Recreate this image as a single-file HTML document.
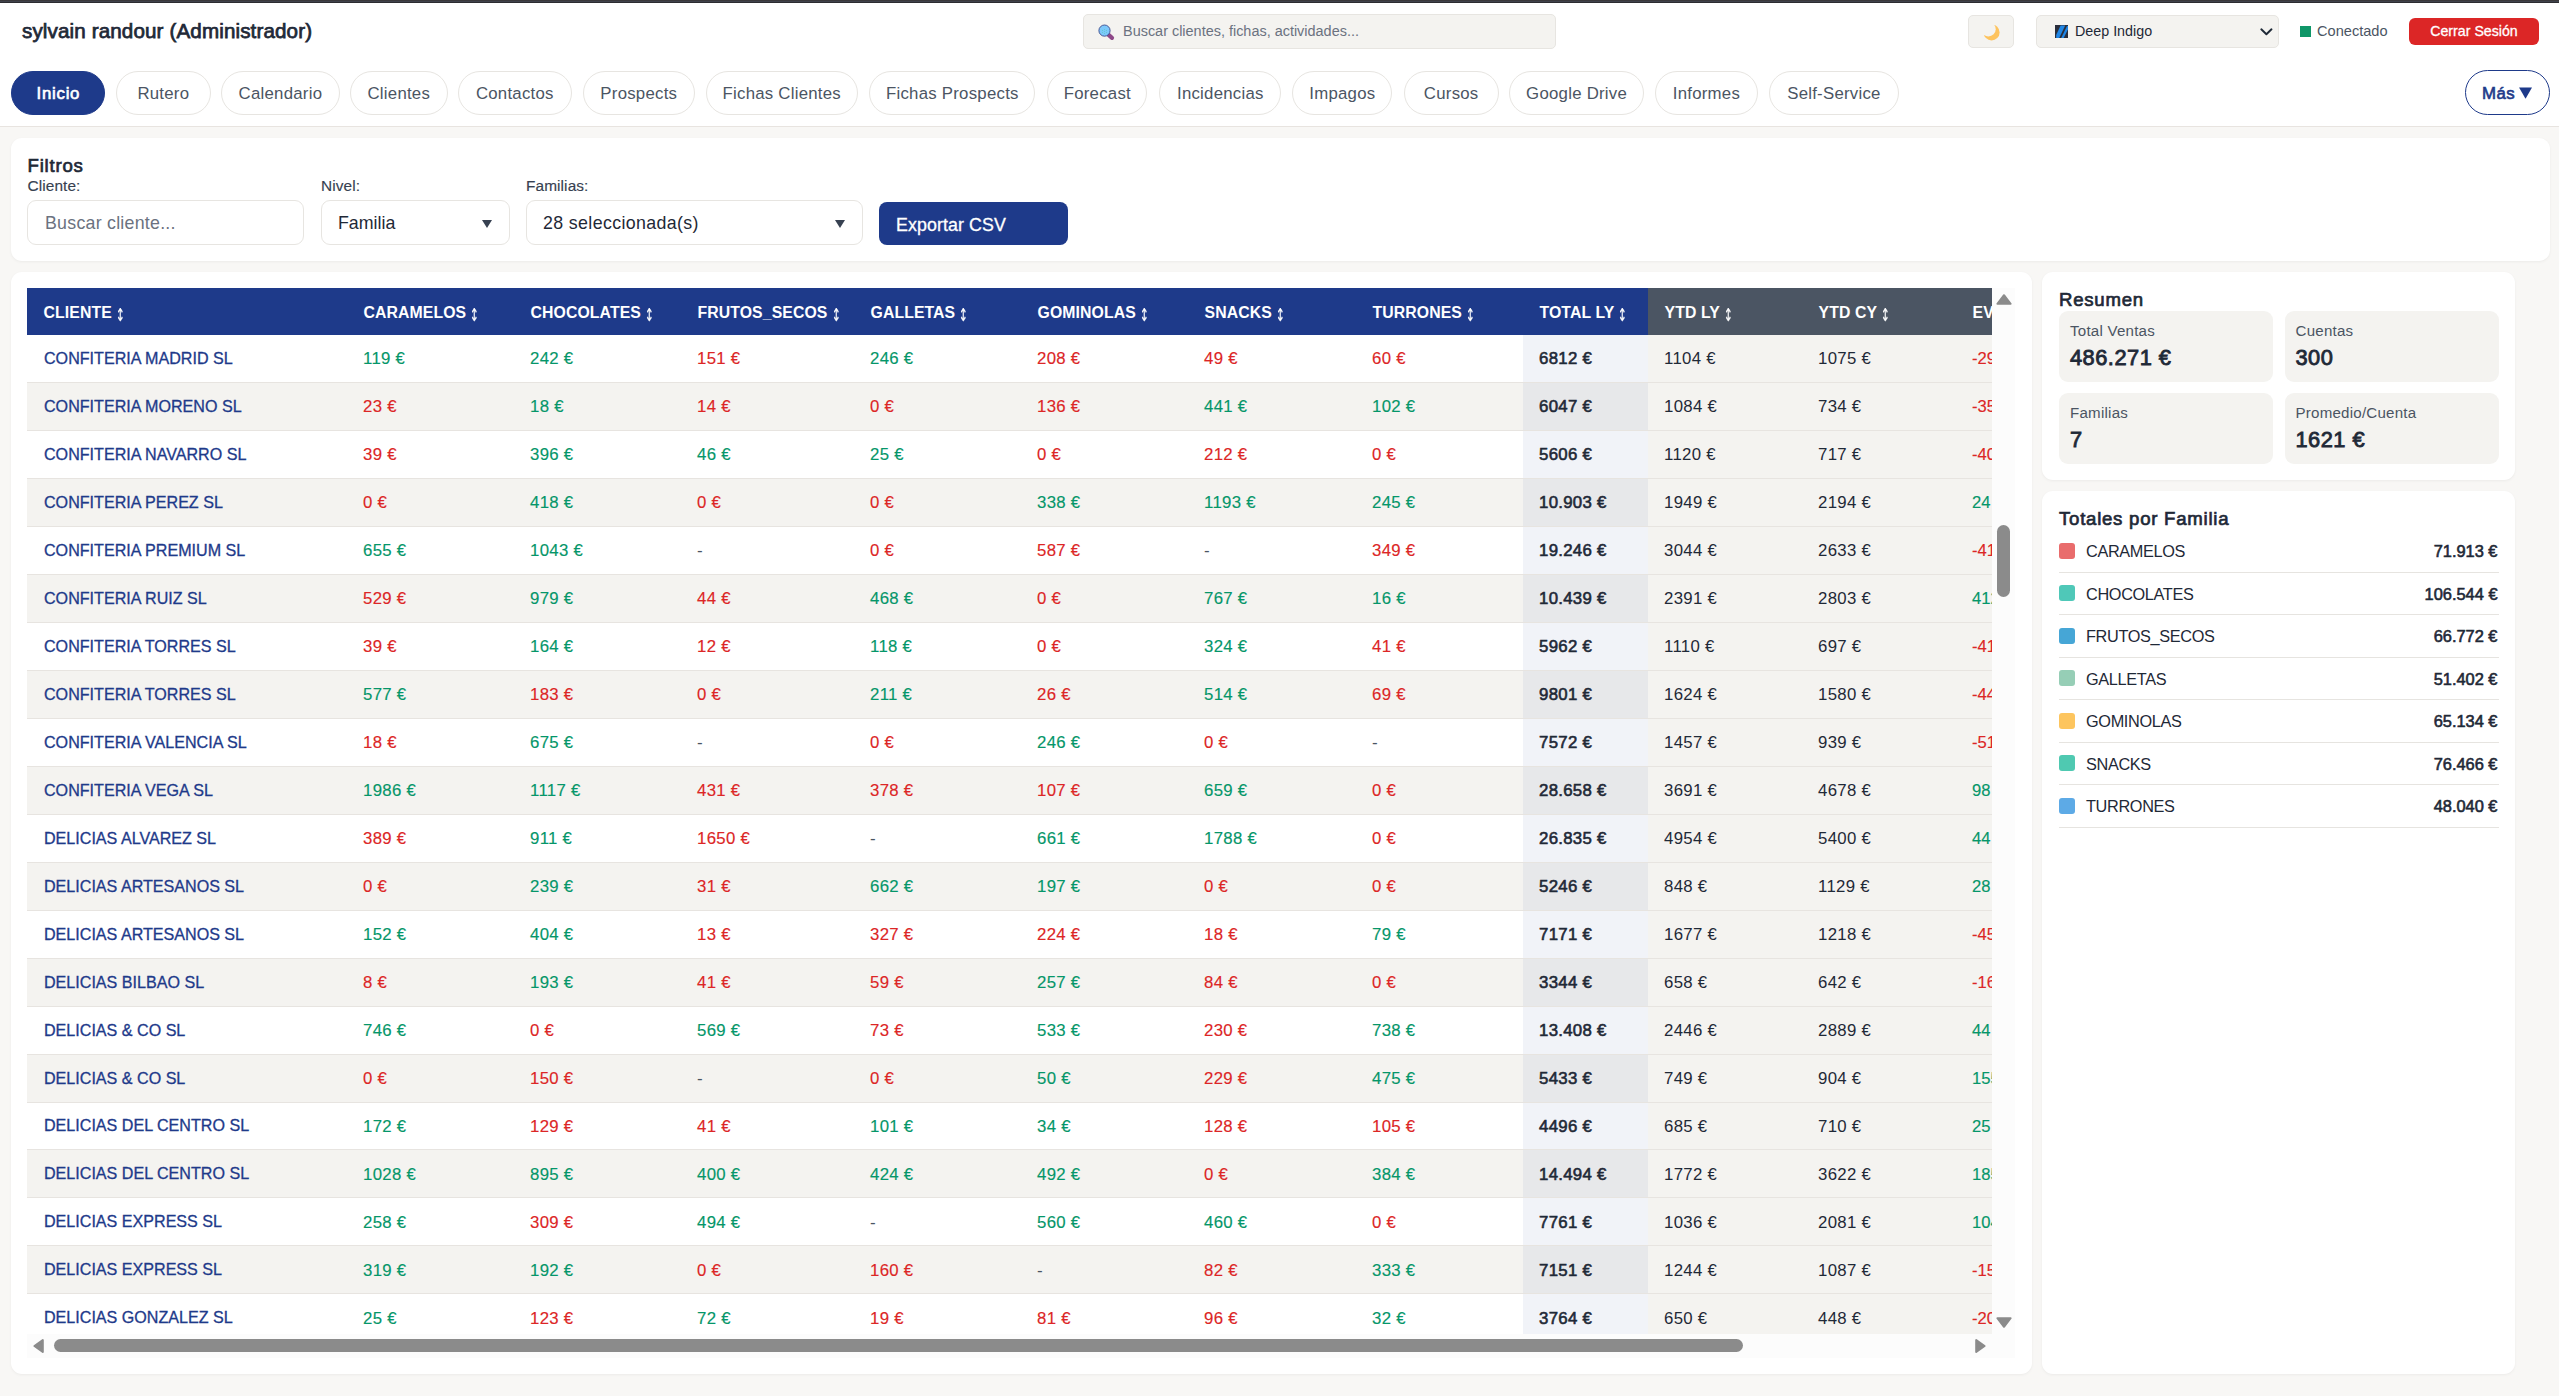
<!DOCTYPE html>
<html lang="es">
<head>
<meta charset="utf-8">
<title>CRM - Ventas por Familia</title>
<style>
*{box-sizing:border-box;margin:0;padding:0}
html,body{width:2559px;height:1396px;overflow:hidden}
body{background:#f8f7f5;font-family:"Liberation Sans",sans-serif;color:#1f2937;position:relative}
.topbar{position:absolute;left:0;top:0;width:2559px;height:3px;background:linear-gradient(#3a383a 0,#3a383a 1px,#40434c 1px,#40434c 2px,#2d2d31 2px,#2d2d31 3px)}
.hdr{position:absolute;left:0;top:3px;width:2559px;height:57px;background:#fff;box-shadow:0 1px 4px rgba(0,0,0,.04)}
.title{position:absolute;left:22px;top:15px;font-size:20.6px;letter-spacing:.13px;-webkit-text-stroke:.75px #1f2937;color:#1f2937;line-height:26px;white-space:nowrap}
.search{position:absolute;left:1083px;top:11px;width:473px;height:34.5px;background:#f4f3f0;border:1px solid #e7e5e1;border-radius:5px}
.mag{position:absolute;left:14px;top:9px}
.ph{position:absolute;left:39px;top:0;line-height:32.5px;font-size:14.45px;color:#6b7280;white-space:nowrap}
.moonbtn{position:absolute;left:1968px;top:12px;width:46px;height:33px;background:#f4f3f0;border:1px solid #e7e5e1;border-radius:5px}
.moonbtn svg{position:absolute;left:14.6px;top:8.6px}
.theme{position:absolute;left:2036px;top:12px;width:243px;height:33px;background:#f4f3f0;border:1px solid #e7e5e1;border-radius:5px}
.tic{position:absolute;left:18px;top:9px}
.tname{position:absolute;left:38px;top:0;line-height:31px;font-size:14.3px;color:#1f2937;white-space:nowrap}
.chev{position:absolute;left:222.5px;top:12.2px}
.conn{position:absolute;left:2300px;top:12px;height:33px;white-space:nowrap}
.dot{position:absolute;left:0;top:11px;width:11px;height:11px;background:#0f9668}
.ctext{position:absolute;left:17px;top:0;line-height:33px;font-size:14.6px;color:#4b5563}
.logout{position:absolute;left:2409px;top:15px;width:130px;height:27px;background:#dc2626;border-radius:6px;color:#fff;font-size:14.2px;-webkit-text-stroke:.3px #fff;line-height:27px;text-align:center;white-space:nowrap}
.nav{position:absolute;left:0;top:60px;width:2559px;height:67px;background:#fff;border-bottom:1px solid #e8e4e0}
.pill{position:absolute;top:11px;height:44px;border:1px solid #e7e5e1;border-radius:22px;background:#fff;color:#4b5563;font-size:16.8px;letter-spacing:.25px;line-height:44px;text-align:center;white-space:nowrap}
.pill.active{background:#1e3a8a;border-color:#1e3a8a;color:#fff;-webkit-text-stroke:.65px #fff;letter-spacing:.75px;padding-left:.75px}
.pill.more{border:1.5px solid #1e3a8a;color:#1e3a8a;font-weight:normal;-webkit-text-stroke:.65px #1e3a8a;letter-spacing:.5px;line-height:46px;top:10px;height:45px;border-radius:22.5px;text-align:left;padding-left:16px}
.tri{font-family:"DejaVu Sans",sans-serif;font-size:17px;line-height:10px;position:absolute;left:53px;top:15.5px;transform:scaleY(.86);-webkit-text-stroke:0;letter-spacing:0}
.card{position:absolute;background:#fff;border-radius:11px;box-shadow:0 1px 3px rgba(0,0,0,.05)}
.filters{left:11px;top:137.5px;width:2539px;height:123.5px}
.ftitle{position:absolute;left:16.5px;top:16.4px;font-size:18.6px;line-height:24px;font-weight:normal;-webkit-text-stroke:.7px #1f2937;letter-spacing:.8px;color:#1f2937}
.flabel{position:absolute;top:38px;font-size:15.4px;letter-spacing:.1px;-webkit-text-stroke:.15px #374151;line-height:20px;color:#374151}
.finput{position:absolute;top:62.5px;height:44.5px;border:1px solid #e7e5e1;border-radius:9px;background:#fff}
.fph{position:absolute;left:17px;top:.75px;line-height:42.5px;font-size:17.8px;letter-spacing:.25px;color:#6b7280;white-space:nowrap}
.fval{position:absolute;left:16px;top:.75px;line-height:42.5px;font-size:17.8px;color:#1f2937;white-space:nowrap}
.farrow{position:absolute;right:17px;top:19px;width:0;height:0;border-left:5.5px solid transparent;border-right:5.5px solid transparent;border-top:8.5px solid #374151}
.export{position:absolute;left:867.5px;top:64.5px;width:189px;height:43px;background:#1e3a8a;border-radius:8px;color:#fff;font-size:17.8px;letter-spacing:.1px;-webkit-text-stroke:.3px #fff;line-height:47px;padding-left:17.5px;white-space:nowrap}
.tcard{left:11px;top:272px;width:2021px;height:1102px}
.viewport{position:absolute;left:16px;top:16px;width:1965px;height:1046px;overflow:hidden}
table{border-collapse:separate;border-spacing:0;table-layout:fixed;width:2083px}
th{height:47px;background:#1e3a8a;color:#fff;font-size:15.8px;letter-spacing:.1px;font-weight:bold;text-align:left;padding:2.5px 0 0 16.5px;white-space:nowrap;vertical-align:middle}
th.g{background:#4b5563}
.srt{display:inline-block;font-family:"DejaVu Sans",sans-serif;font-weight:normal;font-size:17.5px;line-height:10px;position:relative;top:3.1px;margin-left:-3.3px;transform:scaleX(.62);-webkit-text-stroke:.2px #fff}
td{height:47.97px;border-bottom:1px solid #e7e4e0;font-size:16.4px;padding:2px 0 0 16px;white-space:nowrap;vertical-align:middle;color:#1f2937}
tbody tr:nth-child(even) td{background:#f4f3f0}
td.cl{color:#1e3a8a;padding-left:17px;padding-top:0;font-size:16.1px;-webkit-text-stroke:.3px #1e3a8a}
td.g{color:#059669;font-size:16.8px;letter-spacing:.3px;-webkit-text-stroke:.15px #059669}
td.r{color:#dc2626;font-size:16.8px;letter-spacing:.3px;-webkit-text-stroke:.15px #dc2626}
td.na{color:#4b5563;font-size:17px}
td.tot{-webkit-text-stroke:.6px #1f2937;font-size:16.8px;letter-spacing:.3px;background:#f1f3f8;color:#1f2937}
tbody tr:nth-child(even) td.tot{background:#e7e8ea}
td.y{background:#f4f3f0;font-size:16.8px;letter-spacing:.3px}
.vtrack{position:absolute;left:1981px;top:16px;width:23px;height:1069.5px;background:#fcfcfc}
.vthumb{position:absolute;left:5px;top:237px;width:13px;height:72px;border-radius:6.5px;background:#8b8b8b}
.htrack{position:absolute;left:16px;top:1062px;width:1965px;height:23.5px;background:#fcfcfc}
.hthumb{position:absolute;left:27px;top:5px;width:1689px;height:13px;border-radius:6.5px;background:#8b8b8b}
.arr{position:absolute}
.resumen{left:2042px;top:272px;width:473px;height:207.5px}
.totales{left:2042px;top:490.5px;width:473px;height:883.5px}
.ctitle{position:absolute;left:17px;top:16.6px;letter-spacing:.75px;font-size:18.6px;line-height:24px;font-weight:normal;-webkit-text-stroke:.7px #1f2937;color:#1f2937;white-space:nowrap}
.tile{position:absolute;width:214px;height:71px;background:#f4f3f0;border-radius:9px}
.tl{position:absolute;left:11px;top:9.5px;font-size:15.1px;letter-spacing:.23px;line-height:20px;color:#4b5563;white-space:nowrap}
.tv{position:absolute;left:11px;top:33px;font-size:21.8px;letter-spacing:.5px;line-height:28px;-webkit-text-stroke:.85px #1f2937;color:#1f2937;white-space:nowrap}
.fl{list-style:none;position:absolute;left:17px;top:39.5px;width:439.5px}
.fl li{position:relative;height:42.5px;border-bottom:1px solid #e6e4e0}
.sw{position:absolute;left:0;top:12.5px;width:16px;height:16px;border-radius:3px}
.fn{position:absolute;left:27px;top:1px;line-height:41px;font-size:16.3px;letter-spacing:-.35px;color:#1f2937;white-space:nowrap}
.fv{position:absolute;right:1px;top:1px;line-height:41px;font-size:16.4px;-webkit-text-stroke:.6px #1f2937;color:#1f2937;white-space:nowrap}
td.y.g,td.y.r{letter-spacing:0;font-size:16.6px}
</style>
</head>
<body>
<div class="topbar"></div>
<header class="hdr">
<div class="title">sylvain randour (Administrador)</div>
<div class="search"><svg class="mag" viewBox="0 0 18 18" width="18" height="18"><line x1="10.6" y1="10.9" x2="14" y2="13.8" stroke="#8e4888" stroke-width="4.2" stroke-linecap="round"/><circle cx="6.5" cy="6.6" r="5.6" fill="#7cc8fb" stroke="#3b4a8c" stroke-width=".9"/><g fill="#3ed09a"><circle cx="6.5" cy="7.4" r=".45"/><circle cx="6.5" cy="5.4" r=".45"/><circle cx="6.5" cy="9.4" r=".45"/><circle cx="4.6" cy="6.4" r=".45"/><circle cx="8.4" cy="6.4" r=".45"/><circle cx="4.6" cy="8.4" r=".45"/><circle cx="8.4" cy="8.4" r=".45"/></g></svg><span class="ph">Buscar clientes, fichas, actividades...</span></div>
<div class="moonbtn"><svg viewBox="0 0 18 18" width="18" height="18"><defs><mask id="mm"><rect width="18" height="18" fill="#000"/><circle cx="7.6" cy="7.4" r="8" fill="#fff"/><circle cx="4.4" cy="4.2" r="7.3" fill="#000"/></mask></defs><rect width="18" height="18" fill="#fdc35e" mask="url(#mm)"/></svg></div>
<div class="theme"><svg class="tic" viewBox="0 0 13 13" width="13" height="13"><rect width="13" height="13" fill="#2a2e3b"/><path d="M1.2 13 L1.2 10 L5.6 .6 L10.2 .6 L4.2 13 Z" fill="#1f86e6"/><path d="M6.2 13 L12 1 L13 1 L13 4.2 L8.6 13 Z" fill="#1f86e6"/></svg><span class="tname">Deep Indigo</span><svg class="chev" viewBox="0 0 13 8" width="13" height="8"><path d="M1.3 1.3 L6.4 6.3 L11.5 1.3" fill="none" stroke="#1f2937" stroke-width="1.9" stroke-linecap="round" stroke-linejoin="round"/></svg></div>
<div class="conn"><span class="dot"></span><span class="ctext">Conectado</span></div>
<div class="logout">Cerrar Sesión</div>
</header>
<nav class="nav">
<a class="pill active" style="left:11px;width:94px">Inicio</a>
<a class="pill" style="left:116px;width:94.7px">Rutero</a>
<a class="pill" style="left:221px;width:118.8px">Calendario</a>
<a class="pill" style="left:350px;width:97.6px">Clientes</a>
<a class="pill" style="left:458px;width:113.6px">Contactos</a>
<a class="pill" style="left:583px;width:111.6px">Prospects</a>
<a class="pill" style="left:706px;width:151.5px">Fichas Clientes</a>
<a class="pill" style="left:869.2px;width:166.3px">Fichas Prospects</a>
<a class="pill" style="left:1047.3px;width:100.1px">Forecast</a>
<a class="pill" style="left:1159.2px;width:122.3px">Incidencias</a>
<a class="pill" style="left:1292.3px;width:100.1px">Impagos</a>
<a class="pill" style="left:1403.8px;width:94.8px">Cursos</a>
<a class="pill" style="left:1509.4px;width:134.4px">Google Drive</a>
<a class="pill" style="left:1655px;width:102.8px">Informes</a>
<a class="pill" style="left:1769.3px;width:129.3px">Self-Service</a>
<a class="pill more" style="left:2465px;width:85px">Más <span class="tri">▼</span></a>
</nav>
<section class="card filters">
<h3 class="ftitle">Filtros</h3>
<label class="flabel" style="left:16.5px">Cliente:</label>
<label class="flabel" style="left:310px">Nivel:</label>
<label class="flabel" style="left:515px">Familias:</label>
<div class="finput" style="left:16px;width:277px"><span class="fph">Buscar cliente...</span></div>
<div class="finput" style="left:310px;width:188.5px"><span class="fval">Familia</span><span class="farrow"></span></div>
<div class="finput" style="left:515px;width:336.5px"><span class="fval" style="letter-spacing:.37px">28 seleccionada(s)</span><span class="farrow"></span></div>
<div class="export">Exportar CSV</div>
</section>
<section class="card tcard">
<div class="viewport">
<table>
<thead><tr><th style="width:320px"><span class="hl">CLIENTE</span> <span class="srt">↕</span></th><th style="width:167px"><span class="hl">CARAMELOS</span> <span class="srt">↕</span></th><th style="width:167px"><span class="hl">CHOCOLATES</span> <span class="srt">↕</span></th><th style="width:173px"><span class="hl">FRUTOS_SECOS</span> <span class="srt">↕</span></th><th style="width:167px"><span class="hl">GALLETAS</span> <span class="srt">↕</span></th><th style="width:167px"><span class="hl">GOMINOLAS</span> <span class="srt">↕</span></th><th style="width:168px"><span class="hl">SNACKS</span> <span class="srt">↕</span></th><th style="width:167px"><span class="hl">TURRONES</span> <span class="srt">↕</span></th><th style="width:125px"><span class="hl">TOTAL LY</span> <span class="srt">↕</span></th><th class="g" style="width:154px"><span class="hl">YTD LY</span> <span class="srt">↕</span></th><th class="g" style="width:154px"><span class="hl">YTD CY</span> <span class="srt">↕</span></th><th class="g" style="width:154px"><span class="hl">EVOL %</span> <span class="srt">↕</span></th></tr></thead>
<tbody>
<tr><td class="cl">CONFITERIA MADRID SL</td><td class="g">119 €</td><td class="g">242 €</td><td class="r">151 €</td><td class="g">246 €</td><td class="r">208 €</td><td class="r">49 €</td><td class="r">60 €</td><td class="tot">6812 €</td><td class="y">1104 €</td><td class="y">1075 €</td><td class="y r">-29 %</td></tr>
<tr><td class="cl">CONFITERIA MORENO SL</td><td class="r">23 €</td><td class="g">18 €</td><td class="r">14 €</td><td class="r">0 €</td><td class="r">136 €</td><td class="g">441 €</td><td class="g">102 €</td><td class="tot">6047 €</td><td class="y">1084 €</td><td class="y">734 €</td><td class="y r">-35 %</td></tr>
<tr><td class="cl">CONFITERIA NAVARRO SL</td><td class="r">39 €</td><td class="g">396 €</td><td class="g">46 €</td><td class="g">25 €</td><td class="r">0 €</td><td class="r">212 €</td><td class="r">0 €</td><td class="tot">5606 €</td><td class="y">1120 €</td><td class="y">717 €</td><td class="y r">-40 %</td></tr>
<tr><td class="cl">CONFITERIA PEREZ SL</td><td class="r">0 €</td><td class="g">418 €</td><td class="r">0 €</td><td class="r">0 €</td><td class="g">338 €</td><td class="g">1193 €</td><td class="g">245 €</td><td class="tot">10.903 €</td><td class="y">1949 €</td><td class="y">2194 €</td><td class="y g">24 %</td></tr>
<tr><td class="cl">CONFITERIA PREMIUM SL</td><td class="g">655 €</td><td class="g">1043 €</td><td class="na">-</td><td class="r">0 €</td><td class="r">587 €</td><td class="na">-</td><td class="r">349 €</td><td class="tot">19.246 €</td><td class="y">3044 €</td><td class="y">2633 €</td><td class="y r">-41 %</td></tr>
<tr><td class="cl">CONFITERIA RUIZ SL</td><td class="r">529 €</td><td class="g">979 €</td><td class="r">44 €</td><td class="g">468 €</td><td class="r">0 €</td><td class="g">767 €</td><td class="g">16 €</td><td class="tot">10.439 €</td><td class="y">2391 €</td><td class="y">2803 €</td><td class="y g">412 %</td></tr>
<tr><td class="cl">CONFITERIA TORRES SL</td><td class="r">39 €</td><td class="g">164 €</td><td class="r">12 €</td><td class="g">118 €</td><td class="r">0 €</td><td class="g">324 €</td><td class="r">41 €</td><td class="tot">5962 €</td><td class="y">1110 €</td><td class="y">697 €</td><td class="y r">-41 %</td></tr>
<tr><td class="cl">CONFITERIA TORRES SL</td><td class="g">577 €</td><td class="r">183 €</td><td class="r">0 €</td><td class="g">211 €</td><td class="r">26 €</td><td class="g">514 €</td><td class="r">69 €</td><td class="tot">9801 €</td><td class="y">1624 €</td><td class="y">1580 €</td><td class="y r">-44 %</td></tr>
<tr><td class="cl">CONFITERIA VALENCIA SL</td><td class="r">18 €</td><td class="g">675 €</td><td class="na">-</td><td class="r">0 €</td><td class="g">246 €</td><td class="r">0 €</td><td class="na">-</td><td class="tot">7572 €</td><td class="y">1457 €</td><td class="y">939 €</td><td class="y r">-51 %</td></tr>
<tr><td class="cl">CONFITERIA VEGA SL</td><td class="g">1986 €</td><td class="g">1117 €</td><td class="r">431 €</td><td class="r">378 €</td><td class="r">107 €</td><td class="g">659 €</td><td class="r">0 €</td><td class="tot">28.658 €</td><td class="y">3691 €</td><td class="y">4678 €</td><td class="y g">98 %</td></tr>
<tr><td class="cl">DELICIAS ALVAREZ SL</td><td class="r">389 €</td><td class="g">911 €</td><td class="r">1650 €</td><td class="na">-</td><td class="g">661 €</td><td class="g">1788 €</td><td class="r">0 €</td><td class="tot">26.835 €</td><td class="y">4954 €</td><td class="y">5400 €</td><td class="y g">44 %</td></tr>
<tr><td class="cl">DELICIAS ARTESANOS SL</td><td class="r">0 €</td><td class="g">239 €</td><td class="r">31 €</td><td class="g">662 €</td><td class="g">197 €</td><td class="r">0 €</td><td class="r">0 €</td><td class="tot">5246 €</td><td class="y">848 €</td><td class="y">1129 €</td><td class="y g">28 %</td></tr>
<tr><td class="cl">DELICIAS ARTESANOS SL</td><td class="g">152 €</td><td class="g">404 €</td><td class="r">13 €</td><td class="r">327 €</td><td class="r">224 €</td><td class="r">18 €</td><td class="g">79 €</td><td class="tot">7171 €</td><td class="y">1677 €</td><td class="y">1218 €</td><td class="y r">-45 %</td></tr>
<tr><td class="cl">DELICIAS BILBAO SL</td><td class="r">8 €</td><td class="g">193 €</td><td class="r">41 €</td><td class="r">59 €</td><td class="g">257 €</td><td class="r">84 €</td><td class="r">0 €</td><td class="tot">3344 €</td><td class="y">658 €</td><td class="y">642 €</td><td class="y r">-16 %</td></tr>
<tr><td class="cl">DELICIAS &amp; CO SL</td><td class="g">746 €</td><td class="r">0 €</td><td class="g">569 €</td><td class="r">73 €</td><td class="g">533 €</td><td class="r">230 €</td><td class="g">738 €</td><td class="tot">13.408 €</td><td class="y">2446 €</td><td class="y">2889 €</td><td class="y g">44 %</td></tr>
<tr><td class="cl">DELICIAS &amp; CO SL</td><td class="r">0 €</td><td class="r">150 €</td><td class="na">-</td><td class="r">0 €</td><td class="g">50 €</td><td class="r">229 €</td><td class="g">475 €</td><td class="tot">5433 €</td><td class="y">749 €</td><td class="y">904 €</td><td class="y g">155 %</td></tr>
<tr><td class="cl">DELICIAS DEL CENTRO SL</td><td class="g">172 €</td><td class="r">129 €</td><td class="r">41 €</td><td class="g">101 €</td><td class="g">34 €</td><td class="r">128 €</td><td class="r">105 €</td><td class="tot">4496 €</td><td class="y">685 €</td><td class="y">710 €</td><td class="y g">25 %</td></tr>
<tr><td class="cl">DELICIAS DEL CENTRO SL</td><td class="g">1028 €</td><td class="g">895 €</td><td class="g">400 €</td><td class="g">424 €</td><td class="g">492 €</td><td class="r">0 €</td><td class="g">384 €</td><td class="tot">14.494 €</td><td class="y">1772 €</td><td class="y">3622 €</td><td class="y g">185 %</td></tr>
<tr><td class="cl">DELICIAS EXPRESS SL</td><td class="g">258 €</td><td class="r">309 €</td><td class="g">494 €</td><td class="na">-</td><td class="g">560 €</td><td class="g">460 €</td><td class="r">0 €</td><td class="tot">7761 €</td><td class="y">1036 €</td><td class="y">2081 €</td><td class="y g">104 %</td></tr>
<tr><td class="cl">DELICIAS EXPRESS SL</td><td class="g">319 €</td><td class="g">192 €</td><td class="r">0 €</td><td class="r">160 €</td><td class="na">-</td><td class="r">82 €</td><td class="g">333 €</td><td class="tot">7151 €</td><td class="y">1244 €</td><td class="y">1087 €</td><td class="y r">-15 %</td></tr>
<tr><td class="cl">DELICIAS GONZALEZ SL</td><td class="g">25 €</td><td class="r">123 €</td><td class="g">72 €</td><td class="r">19 €</td><td class="r">81 €</td><td class="r">96 €</td><td class="g">32 €</td><td class="tot">3764 €</td><td class="y">650 €</td><td class="y">448 €</td><td class="y r">-20 %</td></tr>
</tbody>
</table>
</div>
<div class="vtrack"><svg class="arr" style="left:3.5px;top:6px" width="16" height="11" viewBox="0 0 16 11"><path d="M8 1.2 L14.6 9.8 L1.4 9.8 Z" fill="#8b8b8b" stroke="#8b8b8b" stroke-width="2" stroke-linejoin="round"/></svg><div class="vthumb"></div><svg class="arr" style="left:3.5px;top:1029px" width="16" height="11" viewBox="0 0 16 11"><path d="M8 9.8 L14.6 1.2 L1.4 1.2 Z" fill="#8b8b8b" stroke="#8b8b8b" stroke-width="2" stroke-linejoin="round"/></svg></div>
<div class="htrack"><svg class="arr" style="left:5.5px;top:4px" width="11" height="16" viewBox="0 0 11 16"><path d="M1.4 8 L9.8 2 L9.8 14 Z" fill="#8b8b8b" stroke="#8b8b8b" stroke-width="2" stroke-linejoin="round"/></svg><div class="hthumb"></div><svg class="arr" style="left:1947.5px;top:4px" width="11" height="16" viewBox="0 0 11 16"><path d="M9.6 8 L1.2 2 L1.2 14 Z" fill="#8b8b8b" stroke="#8b8b8b" stroke-width="2" stroke-linejoin="round"/></svg></div>
</section>
<section class="card resumen">
<h3 class="ctitle" style="top:15.8px">Resumen</h3>
<div class="tile" style="left:17px;top:39px"><div class="tl">Total Ventas</div><div class="tv">486.271 €</div></div>
<div class="tile" style="left:242.5px;top:39px"><div class="tl">Cuentas</div><div class="tv">300</div></div>
<div class="tile" style="left:17px;top:121px"><div class="tl">Familias</div><div class="tv">7</div></div>
<div class="tile" style="left:242.5px;top:121px"><div class="tl">Promedio/Cuenta</div><div class="tv">1621 €</div></div>
</section>
<section class="card totales">
<h3 class="ctitle">Totales por Familia</h3>
<ul class="fl">
<li><span class="sw" style="background:#e96c6c"></span><span class="fn">CARAMELOS</span><span class="fv">71.913 €</span></li>
<li><span class="sw" style="background:#4fc8b8"></span><span class="fn">CHOCOLATES</span><span class="fv">106.544 €</span></li>
<li><span class="sw" style="background:#46a6d6"></span><span class="fn">FRUTOS_SECOS</span><span class="fv">66.772 €</span></li>
<li><span class="sw" style="background:#96ceb6"></span><span class="fn">GALLETAS</span><span class="fv">51.402 €</span></li>
<li><span class="sw" style="background:#fdc55e"></span><span class="fn">GOMINOLAS</span><span class="fv">65.134 €</span></li>
<li><span class="sw" style="background:#4fc9b1"></span><span class="fn">SNACKS</span><span class="fv">76.466 €</span></li>
<li><span class="sw" style="background:#5daae6"></span><span class="fn">TURRONES</span><span class="fv">48.040 €</span></li>
</ul>
</section>
</body>
</html>
